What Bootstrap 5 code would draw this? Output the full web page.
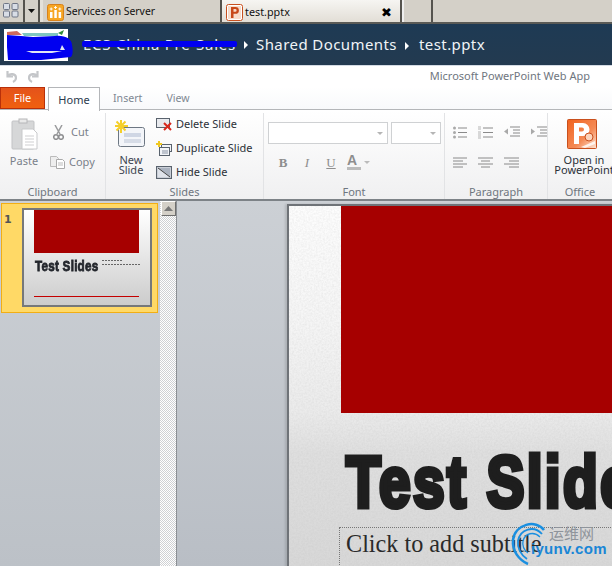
<!DOCTYPE html>
<html lang="en">
<head>
<meta charset="utf-8">
<title>test.pptx</title>
<link href="https://cdn.jsdelivr.net/npm/bootstrap@5.3.0/dist/css/bootstrap.min.css" rel="stylesheet">
<style>
html,body{height:100%;margin:0;overflow:hidden}
body{font-family:"Noto Sans","Liberation Sans",sans-serif;font-size:11px;color:#333;background:#c5c9ce;width:612px;height:566px}
.app{width:612px;height:566px;overflow:hidden}
svg{display:block;flex:none}
/* browser tabs */
.tabstrip{height:24px;background:#d4d0c8;border-bottom:2px solid #5a5a56;flex:none}
.tb-cell{border-right:2px solid #55534e;height:22px}
.tb-grid{width:25px;padding:3px 0 0 3px}
.tb-drop{width:15px}
.tb-pad{width:3px;background:#e4e1da}
.tb-tab{height:22px;border-right:2px solid #55534e;color:#111;gap:3px;padding:2px 0 0 4px}
.tb-one{width:179px;font-size:10.4px;gap:2px}
.tb-two{width:180px;background:linear-gradient(#f6f5f2,#e2ded6);padding-right:8px;position:relative;font-size:10.8px;gap:2px}
.tb-three{width:31px;border-left:2px solid #eee}
.tb-close{font-weight:700;font-size:13px;color:#000;margin-left:auto;line-height:1;font-family:"DejaVu Sans",sans-serif}
/* breadcrumb */
.crumb{height:42px;background:linear-gradient(#1e3a54,#233a50);color:#f0f4f7;font-size:15px;flex:none;padding:5px 0 0 4px;border-bottom:1px solid #d4dbe4}
.logo-box{width:64px;height:32px;background:#fff;margin-right:15px;position:relative}
.logo-box svg{overflow:visible}
.crumb-row{height:31px}
.crumb-struck{position:relative;width:155px;color:#e6ecf1;font-size:15px;white-space:nowrap;letter-spacing:.76px}
.crumb-struck::after{content:"";position:absolute;left:-1px;right:1px;top:8px;height:6px;border-radius:2px;background:#0000f0}
.crumb-arrow{width:0;height:0;border-left:4px solid #fff;border-top:4px solid transparent;border-bottom:4px solid transparent;margin:0 8px 0 6px}
.crumb-arrow-b{margin:2px 10px 0 8px}
.crumb-text{letter-spacing:.42px;white-space:nowrap}
/* quick access */
.qat{height:21px;background:#fff;flex:none;padding:0 22px 0 5px;color:#6f7680;font-size:11px}
.qat-icons{gap:11px}
/* ribbon tabs */
.rtabs{height:23px;background:linear-gradient(#fff,#f8f9fb);border-bottom:1px solid #b4b6b9;flex:none}
.rt-file{width:45px;height:22px;background:linear-gradient(#e4531b,#f0600f);border:1px solid #b8300a;color:#fff;text-align:center;line-height:19px}
.rt-home{width:52px;height:24px;background:#fff;border:1px solid #b4b6b9;border-bottom:0;margin-left:3px;text-align:center;line-height:23px;color:#2c3a4c;position:relative;z-index:1}
.rt-other{color:#7f8893;line-height:23px;font-size:10.600px}
.rt-ins{margin-left:13px}
.rt-view{margin-left:24px}
/* ribbon body */
.ribbon{height:91px;background:linear-gradient(#fff,#f0f0f1);border-bottom:2px solid #7d8287;flex:none;padding-top:3px}
.rgroup{border-right:1px solid #e2e3e5;height:86px;flex:none;position:relative}
.rg-body{height:71px}
.rg-label{text-align:center;color:#6f7680;line-height:14px;height:14px;margin-top:1px}
.rg-clip{width:106px}
.rg-slides{width:158px}
.rg-font{width:181px}
.rg-para{width:103px}
.rg-office{width:64px;border-right:0}
.rbig{text-align:center;line-height:10px;color:#3d4550}
.rsmall{gap:4px;height:24px;color:#2c3138;white-space:nowrap;flex:none}
.faded{color:#7a818a}
.paste{width:48px;padding:5px 0 0 11px}
.paste-text{margin:4px 0 0 -12px;width:50px;line-height:13px}
.cut-row{margin-top:8px;padding-left:5px;gap:7px;height:22px}
.copy-row{margin-top:8px;padding-left:2px;gap:4px;height:22px}
.newslide{width:50px;padding:7px 0 0 9px}
.newslide-text{margin:7px 0 0 -9px;width:50px}
.slide-rows{margin-top:-1px}
.font-body{padding:9px 0 0 4px}
.font-sel{gap:3px}
.font-fmt{margin-top:10px;padding-left:3px}
.para-body{padding:13px 0 0 8px}
.para-row{gap:11px}
.para-row2{margin-top:18px}
.office-body{padding:6px 0 0 19px}
.office-text{margin:5px 0 0 -17px;width:68px;color:#2c3138;white-space:nowrap}
.fselect{height:22px;border:1px solid #cfd1d3;background:#fff;position:relative}
.fselect::after{content:"";position:absolute;right:4px;top:9px;border-left:3px solid transparent;border-right:3px solid transparent;border-top:3px solid #b5b5b5}
.fs-name{width:120px}
.fs-size{width:50px}
.fmt{font-family:"Liberation Serif",serif;font-size:13px;color:#8e8e8e;width:24px;text-align:center;line-height:16px}
/* workspace */
.work{flex:1;min-height:0;background:linear-gradient(#ccd0d5,#b9bec5);position:relative}
.pane{width:160px;background:linear-gradient(#ccd0d5,#bcc1c7);flex:none;padding:2px 2px 0 1px}
.thumb-sel{height:110px;background:#ffd966;border:1px solid #f2ae14;padding:4px 5px 0 2px;gap:8px}
.thumb-num{font-weight:700;color:#555;font-size:11px;line-height:24px;width:10px;font-family:"DejaVu Sans",sans-serif}
.thumb{width:130px;height:99px;border:2px solid #76787a;background:linear-gradient(#fff,#ccc);padding:0 11px 0 10px;overflow:hidden;flex:none}
.th-red{height:43px;background:#a60000}
.th-mid{margin-top:5px;height:16px}
.th-title{width:67px;margin-left:1px;font-family:"Liberation Sans",sans-serif;font-weight:700;font-size:15px;color:#23262c;line-height:16px;-webkit-text-stroke:.8px #23262c;white-space:nowrap;transform:scaleX(.78);transform-origin:0 50%;letter-spacing:.3px;flex:none}
.th-lines{gap:3px;padding-top:2px}
.th-lines i{display:block;height:1px;background:repeating-linear-gradient(90deg,#666 0 2px,transparent 2px 3px)}
.th-w1{width:20px}
.th-w2{width:38px}
.th-rule{height:0;border-top:1px solid #c40000;margin-top:22px}
.scroller{width:17px;flex:none;border-right:1px solid #8b8f94;background:repeating-conic-gradient(#cfd1d4 0 25%,#fff 0 50%) 0 0/2px 2px}
.sc-btn{width:15px;height:15px;background:#d4d0c8;border:1px solid #6e6e6e;border-top-color:#fff;border-left-color:#fff;margin-left:1px}
.canvas{flex:1;min-width:0;padding:3px 0 0 110px;overflow:hidden}
.slide{width:340px;height:400px;background:linear-gradient(#fdfdfd 0,#f5f5f5 30%,#ebebeb 52%,#dfdfdf 62%,#d8d8d8 90%);border-left:2px solid #6f7378;border-top:2px solid #6f7378;padding-left:52px;position:relative;box-shadow:-2px 0 2px rgba(0,0,0,.12)}
.sl-grain{position:absolute;left:0;top:0;width:100%;height:100%;pointer-events:none}
.sl-red{height:207px;width:290px;background:#a60000;position:relative}
.sl-title{position:relative;font-family:"Liberation Sans",sans-serif;font-weight:700;font-size:72px;line-height:72px;color:#1e1e1e;-webkit-text-stroke:5px #1e1e1e;margin:33px 0 0 5px;white-space:nowrap;letter-spacing:3px;transform:scaleX(.79);transform-origin:0 50%;width:400px}
.sl-sub{position:relative;border:1px dotted #777;border-right:0;margin:9px 0 0 -2px;height:80px;font-family:"Liberation Serif",serif;font-size:24.200px;line-height:30px;color:#2a2a2a;padding:1px 0 0 6px;white-space:nowrap}
/* watermark */
.wm{position:absolute;left:510px;top:319px;width:102px;height:46px}
.wm-cn{position:absolute;left:39px;top:4px;font-family:"Noto Sans CJK SC",sans-serif;font-size:15px;color:#8f949b;line-height:18px;white-space:nowrap}
.wm-en{position:absolute;left:21px;top:20px;font-family:"Liberation Sans",sans-serif;font-weight:700;font-size:15px;color:#1a86d6;line-height:18px;white-space:nowrap;letter-spacing:.3px}
</style>
</head>
<body>
<div class="app d-flex flex-column">

  <div class="tabstrip d-flex">
    <div class="tb-cell tb-grid">
      <svg width="16" height="15" viewBox="0 0 16 15"><g fill="#d8dde6" stroke="#6f7686"><rect x=".5" y=".5" width="6" height="6" rx="1"/><rect x="9" y=".5" width="6" height="6" rx="1"/><rect x=".5" y="8" width="6" height="6" rx="1"/><rect x="9" y="8" width="6" height="6" rx="1"/></g></svg>
    </div>
    <div class="tb-cell tb-drop d-flex align-items-center justify-content-center">
      <svg width="7" height="4" viewBox="0 0 7 4"><path d="M0 0h7L3.5 4z" fill="#111"/></svg>
    </div>
    <div class="tb-pad"></div>
    <div class="tb-tab tb-one d-flex align-items-center">
      <svg width="17" height="17" viewBox="0 0 17 17"><rect x=".5" y=".5" width="16" height="16" rx="2" fill="#f6a623" stroke="#d9821a"/><g fill="#fff"><rect x="3" y="8" width="2.5" height="6"/><rect x="7.3" y="6" width="2.5" height="8"/><rect x="11.6" y="8" width="2.5" height="6"/><path d="M4.200 3.500v3M2.700 5h3M8.500 2v3M7 3.500h3M12.800 3.500v3M11.300 5h3" stroke="#fff" stroke-width=".9"/></g></svg>
      <span>Services on Server</span>
    </div>
    <div class="tb-tab tb-two d-flex align-items-center">
      <svg width="17" height="17" viewBox="0 0 17 17"><rect x=".5" y=".5" width="16" height="16" rx="2" fill="#fff" stroke="#c8501f"/><rect x="2" y="2" width="13" height="13" fill="#f7dccb"/><path d="M5 3h4.500a3.400 3.400 0 0 1 0 6.800H7.500V14H5zM7.500 5v2.800h1.700a1.400 1.400 0 0 0 0-2.800z" fill="#c8481a"/></svg>
      <span>test.pptx</span>
      <span class="tb-close">✖</span>
    </div>
    <div class="tb-tab tb-three"></div>
  </div>

  <div class="crumb d-flex align-items-start">
    <div class="logo-box">
      <svg width="64" height="32" viewBox="0 0 64 32"><path d="M3 3l10-1 5 4H3z" fill="#cf6a5c"/><path d="M18 4h36v3H20z" fill="#7fc6c0"/><path d="M54 4l6-3-2 5z" fill="#2f8a3a"/><path d="M3 6l14 1 12 1 22-1c10-1 17 3 17 9 1 5 1 10-1 12l-30 3H4L3 18z" fill="#0000f0"/><path d="M22 22h36l-10 2H28zM58 16l3 5h-5z" fill="#dfe6f5"/></svg>
    </div>
    <div class="crumb-row d-flex align-items-center">
      <div class="crumb-struck">ECS China Pre-Sales</div>
      <div class="crumb-arrow"></div>
      <div class="crumb-text">Shared Documents</div>
      <div class="crumb-arrow crumb-arrow-b"></div>
      <div class="crumb-text">test.pptx</div>
    </div>
  </div>

  <div class="qat d-flex align-items-center justify-content-between">
    <div class="qat-icons d-flex">
      <svg width="12" height="13" viewBox="0 0 12 13"><path d="M2.500 1v5.500H8M3 6c2-3 8-2.500 8 2 0 2-1 3-3 4" fill="none" stroke="#c4c6c9" stroke-width="2.200"/></svg>
      <svg width="12" height="13" viewBox="0 0 12 13"><path d="M9.500 1v5.500H4M9 6C7 3 1 3.500 1 8c0 2 1 3 3 4" fill="none" stroke="#c4c6c9" stroke-width="2.200"/></svg>
    </div>
    <div>Microsoft PowerPoint Web App</div>
  </div>

  <div class="rtabs d-flex">
    <div class="rt-file">File</div>
    <div class="rt-home">Home</div>
    <div class="rt-other rt-ins">Insert</div>
    <div class="rt-other rt-view">View</div>
  </div>

  <div class="ribbon d-flex">
    <div class="rgroup rg-clip">
      <div class="rg-body d-flex">
        <div class="rbig faded paste">
          <svg width="27" height="32" viewBox="0 0 27 32"><rect x="1" y="3" width="22" height="28" rx="1" fill="#d6d7d8" stroke="#c2c3c5"/><rect x="8" y="1" width="8" height="4" fill="#e9e9e9" stroke="#b5b6b8"/><path d="M11 11h11l4 4v16H11z" fill="#fff" stroke="#c8c9cb"/><path d="M14 18h9M14 21h9M14 24h9M14 27h9" stroke="#cfcfd1"/></svg>
          <div class="paste-text">Paste</div>
        </div>
        <div class="flex-grow-1">
          <div class="rsmall cut-row d-flex align-items-center faded">
            <svg width="11" height="15" viewBox="0 0 11 15"><path d="M2 0l5 9M9 0L4 9" stroke="#9a9b9d" stroke-width="1.500"/><circle cx="3" cy="12" r="2.300" fill="none" stroke="#8d8e90" stroke-width="1.500"/><circle cx="8" cy="12" r="2.300" fill="none" stroke="#8d8e90" stroke-width="1.500"/></svg>
            <span>Cut</span>
          </div>
          <div class="rsmall copy-row d-flex align-items-center faded">
            <svg width="15" height="13" viewBox="0 0 15 13"><path d="M.5.500h6l2 2v8h-8z" fill="#eee" stroke="#bbb"/><path d="M6.500 3.500h6l2 2v7h-8z" fill="#fff" stroke="#aaa"/><path d="M8 7h5M8 9h5" stroke="#bbb"/></svg>
            <span>Copy</span>
          </div>
        </div>
      </div>
      <div class="rg-label">Clipboard</div>
    </div>

    <div class="rgroup rg-slides">
      <div class="rg-body d-flex">
        <div class="rbig newslide">
          <svg width="30" height="28" viewBox="0 0 30 28"><rect x="3.500" y="7.500" width="26" height="19" rx="2" fill="#f3f5f9" stroke="#6d7783"/><path d="M9 13h17v4H9z" fill="#cfd6e4"/><path d="M9 20h17M9 22h17" stroke="#bac3d4"/><path d="M6 0v13M0 6h13M1.500 1.500l9 9M10.500 1.500l-9 9" stroke="#f5cf2a" stroke-width="2"/></svg>
          <div class="newslide-text">New<br>Slide</div>
        </div>
        <div class="slide-rows d-flex flex-column flex-grow-1">
          <div class="rsmall d-flex align-items-center">
            <svg width="16" height="13" viewBox="0 0 16 13"><rect x=".5" y=".5" width="13" height="9" fill="#e8eaee" stroke="#59626d"/><path d="M8 5l7 7M15 5l-7 7" stroke="#d8281c" stroke-width="2"/></svg><span>Delete Slide</span>
          </div>
          <div class="rsmall d-flex align-items-center">
            <svg width="16" height="15" viewBox="0 0 16 15"><rect x="5.500" y="3.500" width="10" height="7" fill="#f2f4f8" stroke="#59626d"/><rect x="3.500" y="6.500" width="10" height="8" fill="#f2f4f8" stroke="#59626d"/><path d="M6 10h6M6 12h6" stroke="#8b95a5"/><path d="M3 0v6M0 3h6" stroke="#f0c820" stroke-width="2"/></svg><span>Duplicate Slide</span>
          </div>
          <div class="rsmall d-flex align-items-center">
            <svg width="16" height="13" viewBox="0 0 16 13"><rect x=".5" y=".5" width="15" height="12" fill="#dfe3ea" stroke="#59626d" stroke-width="1.300"/><path d="M2 2l12 9V2z" fill="#aab2bf"/><path d="M2 2l12 9" stroke="#444"/></svg><span>Hide Slide</span>
          </div>
        </div>
      </div>
      <div class="rg-label">Slides</div>
    </div>

    <div class="rgroup rg-font">
      <div class="rg-body font-body">
        <div class="font-sel d-flex">
          <div class="fselect fs-name"></div>
          <div class="fselect fs-size"></div>
        </div>
        <div class="font-fmt d-flex align-items-center">
          <b class="fmt">B</b><i class="fmt">I</i><u class="fmt">U</u>
          <svg width="24" height="17" viewBox="0 0 24 17" class="ms-1"><text x="0" y="11" font-family="Liberation Sans" font-size="14" font-weight="700" fill="#8e8e8e">A</text><rect x="0" y="13" width="14" height="3" fill="#bbb"/><path d="M17 7h6l-3 3z" fill="#bbb"/></svg>
        </div>
      </div>
      <div class="rg-label">Font</div>
    </div>

    <div class="rgroup rg-para">
      <div class="rg-body para-body">
        <div class="para-row d-flex">
          <svg width="14" height="13" viewBox="0 0 14 13"><path d="M5 2h9M5 6.500h9M5 11h9" stroke="#8a8a8a"/><g fill="#a9a9a9"><circle cx="1.500" cy="2" r="1.500"/><circle cx="1.500" cy="6.500" r="1.500"/><circle cx="1.500" cy="11" r="1.500"/></g></svg>
          <svg width="15" height="13" viewBox="0 0 15 13"><path d="M5 2h10M5 6.500h10M5 11h10" stroke="#8a8a8a"/><path d="M0 1h3M0 3h3M0 6h3M0 8h3M0 10h3M0 12h3" stroke="#b5b5b5"/></svg>
          <svg width="16" height="13" viewBox="0 0 16 13"><path d="M6 1h10M9 4h7M9 7h7M6 10h10" stroke="#8a8a8a" stroke-width="1.200"/><path d="M0 5.500l4-3v6z" fill="#a9a9a9"/></svg>
          <svg width="16" height="13" viewBox="0 0 16 13"><path d="M6 1h10M9 4h7M9 7h7M6 10h10" stroke="#8a8a8a" stroke-width="1.200"/><path d="M4 5.500l-4-3v6z" fill="#a9a9a9"/></svg>
        </div>
        <div class="para-row para-row2 d-flex">
          <svg width="14" height="11" viewBox="0 0 14 11"><path d="M0 1h14M0 4h10M0 7h14M0 10h10" stroke="#8a8a8a"/></svg>
          <svg width="15" height="11" viewBox="0 0 15 11"><path d="M0 1h15M3 4h9M0 7h15M3 10h9" stroke="#8a8a8a"/></svg>
          <svg width="15" height="11" viewBox="0 0 15 11"><path d="M0 1h15M5 4h10M0 7h15M5 10h10" stroke="#8a8a8a"/></svg>
        </div>
      </div>
      <div class="rg-label">Paragraph</div>
    </div>

    <div class="rgroup rg-office">
      <div class="rg-body office-body">
        <svg width="31" height="31" viewBox="0 0 31 31"><defs><linearGradient id="pp" x1="0" y1="0" x2="1" y2="1"><stop offset="0" stop-color="#f0621f"/><stop offset=".6" stop-color="#f58a55"/><stop offset="1" stop-color="#fde6d8"/></linearGradient></defs><rect x=".5" y=".5" width="29" height="29" rx="1" fill="url(#pp)" stroke="#c9501d"/><path d="M7 4h9a6.500 6.500 0 0 1 0 13h-4v8H7zM12 8.500v4h3a2 2 0 0 0 0-4z" fill="#fff"/><circle cx="22" cy="18" r="4" fill="#fbd4bc" stroke="#c9501d"/><path d="M14 28l14-6v3l-10 4z" fill="#fff" opacity=".8"/></svg>
        <div class="rbig office-text">Open in<br>PowerPoint</div>
      </div>
      <div class="rg-label">Office</div>
    </div>
  </div>

  <div class="work d-flex">
    <div class="pane">
      <div class="thumb-sel d-flex">
        <div class="thumb-num">1</div>
        <div class="thumb">
          <div class="th-red"></div>
          <div class="th-mid d-flex">
            <div class="th-title">Test Slides</div>
            <div class="th-lines d-flex flex-column"><i class="th-w1"></i><i class="th-w2"></i></div>
          </div>
          <div class="th-rule"></div>
        </div>
      </div>
    </div>
    <div class="scroller">
      <div class="sc-btn d-flex align-items-center justify-content-center">
        <svg width="9" height="5" viewBox="0 0 9 5"><path d="M4.500 0L9 5H0z" fill="#777"/></svg>
      </div>
    </div>
    <div class="canvas">
      <div class="slide">
        <svg class="sl-grain" aria-hidden="true"><filter id="grain"><feTurbulence type="fractalNoise" baseFrequency=".55" numOctaves="2" seed="4"/><feColorMatrix values="0 0 0 0 .45 0 0 0 0 .45 0 0 0 0 .45 .32 0 0 0 -.1"/></filter><rect width="100%" height="100%" filter="url(#grain)"/></svg>
        <div class="sl-red"></div>
        <div class="sl-title">Test Slides</div>
        <div class="sl-sub">Click to add subtitle</div>
      </div>
    </div>
    <div class="wm">
      <svg width="40" height="46" viewBox="0 0 40 46" class="position-absolute top-0 start-0"><g fill="none" stroke="#1a8fe0"><path d="M34 10C26-1 5 4 3 20c-1 11 6 20 15 24" stroke-width="2.500"/><path d="M32 14C24 5 10 9 8 21c-1 7 3 14 9 18" stroke-width="1.800"/><path d="M30 17C24 11 15 13 13 21c-1 5 1 9 5 12" stroke-width="1.300"/></g></svg>
      <div class="wm-cn">运维网</div>
      <div class="wm-en">iyunv.com</div>
    </div>
  </div>
</div>
<script src="https://cdn.jsdelivr.net/npm/bootstrap@5.3.0/dist/js/bootstrap.bundle.min.js"></script>
</body>
</html>
